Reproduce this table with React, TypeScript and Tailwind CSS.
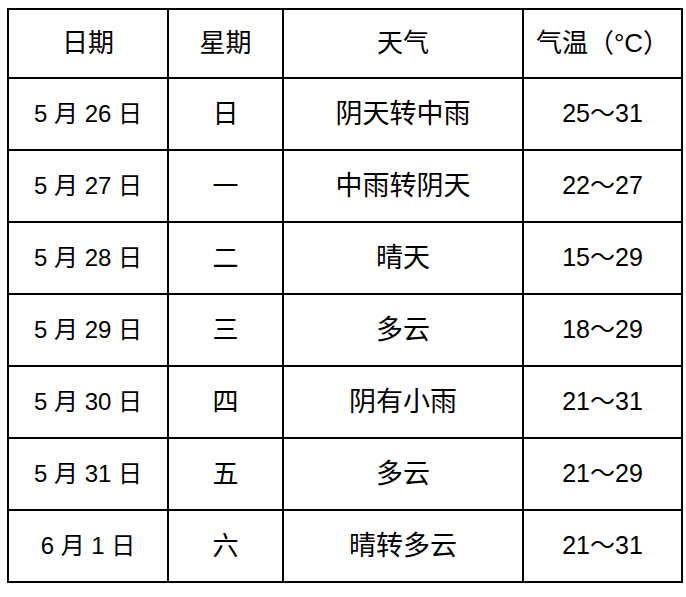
import React from 'react';

type Row = {
  date: string;
  week: string;
  weather: string;
  temp: string;
};

const rows: Row[] = [
  { date: '5 月 26 日', week: '日', weather: '阴天转中雨', temp: '25～31' },
  { date: '5 月 27 日', week: '一', weather: '中雨转阴天', temp: '22～27' },
  { date: '5 月 28 日', week: '二', weather: '晴天', temp: '15～29' },
  { date: '5 月 29 日', week: '三', weather: '多云', temp: '18～29' },
  { date: '5 月 30 日', week: '四', weather: '阴有小雨', temp: '21～31' },
  { date: '5 月 31 日', week: '五', weather: '多云', temp: '21～29' },
  { date: '6 月 1 日', week: '六', weather: '晴转多云', temp: '21～31' },
];

const cell = 'border-2 border-black text-center align-middle p-0';

const App = () => {
  return (
    <div className="min-h-screen w-full bg-white pl-[7px] pt-[8px] font-['Liberation_Sans','Noto_Sans_CJK_SC',sans-serif] text-[26px] text-black">
      <table className="w-[674px] table-fixed border-collapse">
        <colgroup>
          <col className="w-[160px]" />
          <col className="w-[115px]" />
          <col className="w-[240px]" />
          <col className="w-[159px]" />
        </colgroup>
        <thead>
          <tr className="h-[69px]">
            <th className={`${cell} font-normal`}>日期</th>
            <th className={`${cell} font-normal`}>星期</th>
            <th className={`${cell} font-normal`}>天气</th>
            <th className={`${cell} font-normal`}>气温（°C）</th>
          </tr>
        </thead>
        <tbody>
          {rows.map((row, idx) => {
            return (
              <tr key={idx} className="h-[72px]">
                <td className={`${cell} whitespace-pre text-[24px]`}>{row.date}</td>
                <td className={cell}>{row.week}</td>
                <td className={`${cell} text-[27px]`}>{row.weather}</td>
                <td className={`${cell} text-[25px]`}>{row.temp}</td>
              </tr>
            );
          })}
        </tbody>
      </table>
    </div>
  );
};

export default App;
